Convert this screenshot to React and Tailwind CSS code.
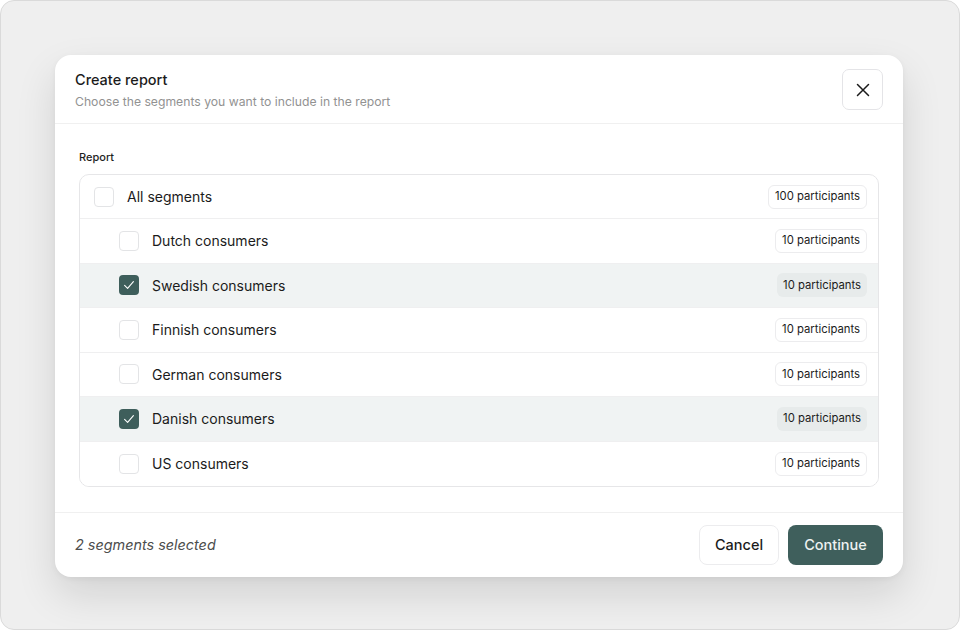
import React, { useState } from "react";

const segments = [
  { name: "Dutch consumers", count: 10 },
  { name: "Swedish consumers", count: 10 },
  { name: "Finnish consumers", count: 10 },
  { name: "German consumers", count: 10 },
  { name: "Danish consumers", count: 10 },
  { name: "US consumers", count: 10 },
];

function Checkbox({ checked }) {
  return checked ? (
    <span className="flex h-5 w-5 shrink-0 items-center justify-center rounded-[4px] bg-[#3e5e5b]">
      <svg width="12" height="12" viewBox="0 0 12 12" fill="none">
        <path d="M1.6 6.3 L4.6 9.3 L10.4 2.6" stroke="white" strokeWidth="1.1" strokeLinecap="round" strokeLinejoin="round" />
      </svg>
    </span>
  ) : (
    <span className="h-5 w-5 shrink-0 rounded-[4px] border border-[#e3e4e6] bg-white" />
  );
}

function Badge({ children, active }) {
  return (
    <span
      className={
        "flex h-6 items-center rounded-[6px] px-[6px] text-[11.3px] text-[#1c1c1c] " +
        (active ? "bg-[#e7ebeb]" : "border border-[#ececee] bg-white")
      }
    >
      {children}
    </span>
  );
}

export default function App() {
  const [selected] = useState(new Set(["Swedish consumers", "Danish consumers"]));
  return (
    <div
      className="h-[630px] w-[960px] rounded-[14px] border border-[#dadada] bg-[#efefef] pl-[54px] pt-[54px]"
      style={{ fontFamily: "Inter, 'Noto Sans', sans-serif" }}
    >
      <div className="flex h-[522px] w-[848px] flex-col overflow-hidden rounded-[16px] bg-white shadow-[0_18px_40px_rgba(0,0,0,0.12),0_2px_6px_rgba(0,0,0,0.05)]">
        {/* header */}
        <div className="flex h-[69px] shrink-0 items-start justify-between border-b border-[#f0f0f0] pl-5 pr-5 pt-[14px]">
          <div className="pt-[1px]">
            <div className="text-[14.5px] font-medium leading-5 text-[#1b1b1b]">Create report</div>
            <div className="mt-[4px] text-[12.2px] leading-4 text-[#929292]">
              Choose the segments you want to include in the report
            </div>
          </div>
          <button className="flex h-[41px] w-[41px] items-center justify-center rounded-[7px] border border-[#e4e4e7] bg-white">
            <svg width="14" height="14" viewBox="0 0 14 14" fill="none">
              <path d="M1.5 1.5 L12.5 12.5 M12.5 1.5 L1.5 12.5" stroke="#1b1b1b" strokeWidth="1.5" strokeLinecap="round" />
            </svg>
          </button>
        </div>

        {/* body */}
        <div className="flex-1 px-6 pt-[25px]">
          <div className="text-[11px] font-medium leading-4 text-[#1f1f1f]">Report</div>
          <div className="mt-[9px] overflow-hidden rounded-[10px] border border-[#e6e6e8]">
            <div className="flex h-[44px] items-center justify-between border-b border-[#efeff0] pl-[14px] pr-[11px]">
              <div className="flex items-center gap-[13px]">
                <Checkbox checked={false} />
                <span className="text-[14px] text-[#1b1b1b]">All segments</span>
              </div>
              <Badge>100 participants</Badge>
            </div>
            {segments.map((s, i) => {
              const on = selected.has(s.name);
              return (
                <div
                  key={s.name}
                  className={
                    "flex h-[44.5px] items-center justify-between pl-[39px] pr-[11px] " +
                    (i < segments.length - 1 ? "border-b border-[#efeff0] " : "") +
                    (on ? "bg-[#f0f3f3]" : "bg-white")
                  }
                >
                  <div className="flex items-center gap-[13px]">
                    <Checkbox checked={on} />
                    <span className="text-[14px] text-[#1b1b1b]">{s.name}</span>
                  </div>
                  <Badge active={on}>{s.count} participants</Badge>
                </div>
              );
            })}
          </div>
        </div>

        {/* footer */}
        <div className="flex h-[65px] shrink-0 items-center justify-between border-t border-[#f0f0f0] px-5">
          <span className="text-[14.4px] italic text-[#4d4d4d]">2 segments selected</span>
          <div className="flex items-center gap-[9px]">
            <button className="h-10 w-[80px] rounded-[8px] border border-[#ececee] bg-white text-[14.5px] font-medium text-[#1b1b1b]">
              Cancel
            </button>
            <button className="h-10 w-[95px] rounded-[8px] bg-[#3f5f5c] text-[14.5px] font-medium text-[#eef2f1]">
              Continue
            </button>
          </div>
        </div>
      </div>
    </div>
  );
}
